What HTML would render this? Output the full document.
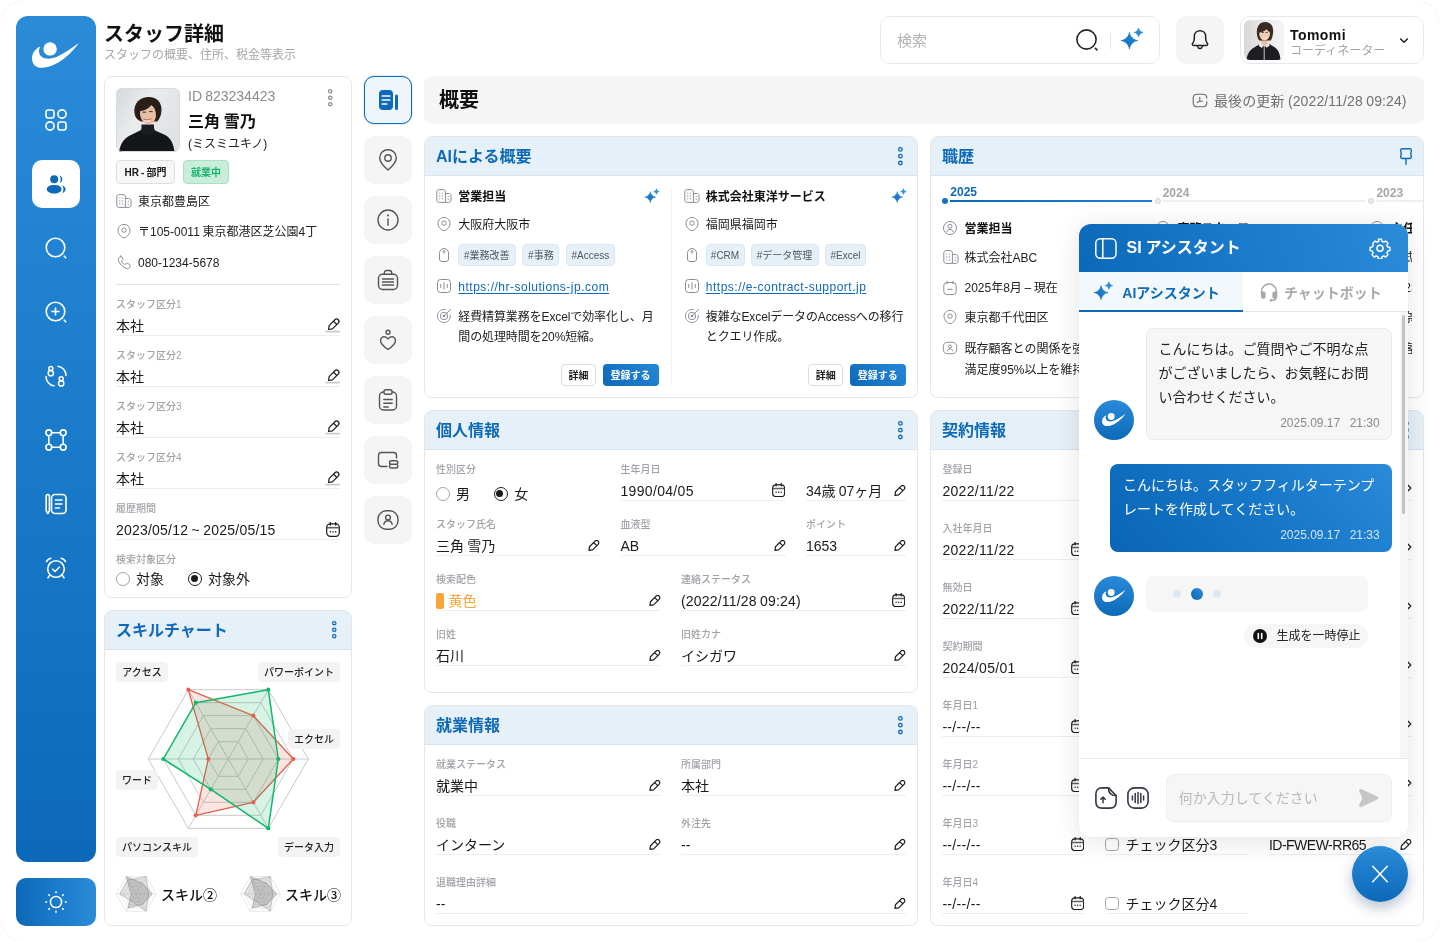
<!DOCTYPE html>
<html lang="ja">
<head>
<meta charset="utf-8">
<title>スタッフ詳細</title>
<style>
*{box-sizing:border-box;margin:0;padding:0}
html,body{width:1440px;height:942px;overflow:hidden;background:#fff}
body{font-family:"Liberation Sans","Noto Sans CJK JP",sans-serif;color:#1a1a1a;position:relative;font-size:14px;line-height:1;word-spacing:-.05em}
.abs{position:absolute}
svg{display:block}
/* sidebar */
#side{position:absolute;left:16px;top:16px;width:80px;height:846px;border-radius:12px;background:linear-gradient(180deg,#2a8bd9 0%,#1f80d0 35%,#0c69b9 100%)}
#side .ic{position:absolute;left:28px;width:24px;height:24px}
#side .act{position:absolute;left:16px;top:144px;width:48px;height:48px;border-radius:10px;background:#fff}
#theme{position:absolute;left:16px;top:878px;width:80px;height:48px;border-radius:10px;background:linear-gradient(90deg,#0c69b9 0%,#2a8bd9 100%)}
/* page header */
#title{position:absolute;left:104px;top:22.300px;font-size:20px;font-weight:700;letter-spacing:0;color:#111;line-height:24px}
#sub{position:absolute;left:104px;top:47.300px;font-size:12px;color:#a6a6a6;line-height:16px}
#search{position:absolute;left:880px;top:16px;width:280px;height:48px;border:1px solid #e8e8e8;border-radius:10px;background:#fff}
#bell{position:absolute;left:1176px;top:16px;width:48px;height:48px;border-radius:10px;background:#f5f5f5}
#user{position:absolute;left:1240px;top:16px;width:184px;height:48px;border:1px solid #e8e8e8;border-radius:10px;background:#fff}
/* cards */
.card{position:absolute;border:1px solid #e6e6e6;border-radius:8px;background:#fff;overflow:hidden}
.chead{position:absolute;left:0;top:0;right:0;height:39px;background:#e6f0f9;border-bottom:1px solid #d5e4f2;color:#0e6ab8;font-weight:700;font-size:16px;line-height:39.400px;padding-left:11px}
.lbl{position:absolute;font-size:10px;font-weight:500;color:#a2a2a8;line-height:12px;white-space:nowrap}
.val{position:absolute;font-size:14px;color:#1a1a1a;line-height:18px;white-space:nowrap}
.ul{position:absolute;height:1px;background:#eeeeee}
.t{position:absolute;white-space:nowrap}

.chip{position:absolute;height:24px;border-radius:4px;font-size:10px;font-weight:700;line-height:24.500px;text-align:center;border:1px solid #dedede;background:#f7f7f7;color:#1a1a1a;white-space:nowrap}
.chip.g{background:#c8eedb;border-color:#a9e0c6;color:#19b36f}
.r12{position:absolute;font-size:12px;line-height:16px;color:#222;white-space:nowrap}
.radio{position:absolute;width:14px;height:14px;border-radius:50%;border:1.500px solid #a4a4a8;background:#fff}
.radio.on{border-color:#1f1f1f;border-width:1.600px}
.radio.on::after{content:"";position:absolute;left:1.900px;top:1.900px;width:7px;height:7px;border-radius:50%;background:#1a1a1a}
.schip{position:absolute;height:20px;border-radius:4px;background:#f3f3f3;font-size:10px;font-weight:500;line-height:22px;text-align:center;color:#222;white-space:nowrap}
.tabb{position:absolute;left:364px;width:48px;height:48px;border-radius:10px;background:#f5f5f5}
.tabb.on{background:#eef5fb;border:1.500px solid #0e6ab8;box-shadow:0 0 0 .5px rgba(14,106,184,.25)}
.tag{position:absolute;height:21.800px;border-radius:4px;background:#e6f0f9;border:1px solid #d9e7f4;font-size:10px;line-height:22.200px;text-align:center;color:#50555e;white-space:nowrap}
.btn{position:absolute;height:22px;border-radius:4px;border:1px solid #dedede;background:#fff;font-size:10px;font-weight:700;line-height:22.600px;text-align:center;color:#222;white-space:nowrap}
.btn.pri{border:0;height:22px;line-height:24.600px;color:#fff;background:linear-gradient(45deg,#0c69b9,#2587d6)}
#root{position:absolute;left:0;top:0;width:1440px;height:942px;will-change:transform}
.cbox{position:absolute;width:13.500px;height:12.800px;border-radius:3.500px;border:1.400px solid #a2a2ac;background:#fff}
#chat{position:absolute;left:1078.600px;top:224px;width:329.200px;height:612.800px;border-radius:12px;background:#fff;box-shadow:0 4px 28px rgba(0,0,0,.11),0 0 2px rgba(0,0,0,.05);overflow:hidden}
#chatin{position:absolute;left:-.6px;top:0;width:330px;height:612px}
#chead{position:absolute;left:0;top:0;width:330px;height:48px;background:linear-gradient(75deg,#0c69b9 0%,#1a7acb 50%,#2a8bd9 100%)}
.ctab{position:absolute;top:48px;height:40px}
.ctab.on{left:0;width:165px;background:#f3f8fc;border-bottom:2px solid #0e6ab8}
.ctab.off{left:165px;width:165px;background:#fff;border-bottom:1px solid #e6e6e6}
.bot{position:absolute;width:40px;height:40px;border-radius:50%;background:linear-gradient(180deg,#2a8bd9,#0c69b9)}
#fab{position:absolute;left:1352px;top:846px;width:56px;height:56px;border-radius:50%;background:linear-gradient(180deg,#2a8bd9,#0c69b9);box-shadow:0 6px 14px rgba(0,40,90,.28)}
.carc{position:absolute;width:21px;height:21px;overflow:hidden}
.carc i{position:absolute;width:41px;height:41px;border-radius:50%;border:1.500px dotted #ececec}
</style>
</head>
<body>
<div id="root">
<!-- ICON SYMBOLS -->
<svg width="0" height="0" style="position:absolute">
<defs>
<linearGradient id="gv" x1="0" y1="0" x2="0" y2="1"><stop offset="0" stop-color="#2a8bd9"/><stop offset="1" stop-color="#0c69b9"/></linearGradient><linearGradient id="gb" x1="0" y1="1" x2="1" y2="0"><stop offset="0" stop-color="#0c69b9"/><stop offset="1" stop-color="#2a8bd9"/></linearGradient>
<symbol id="i-logo" viewBox="0 0 48 27"><path d="M46.900 1C42 8 33 17 25.400 21 19 24.500 11.500 26.600 6.700 25.500 2.500 24.500 0 21 0 16.200 0 11.500 3.500 6.500 8.300 4.600 6.200 8.200 6.800 12.500 9.600 14.700c3.800 2.900 10.400 2.400 15.800-.2C32 11.400 40 6 46.900 1Z" fill="#fff"/><circle cx="18.100" cy="6.900" r="6.700" fill="#fff"/></symbol>
<symbol id="i-pen" viewBox="-1.5 -0.5 16 15"><path d="M2.600 7.100 8.450 1.250A2.330 2.330 0 0 1 11.750 4.550L5.900 10.400 2.100 11Z M7 2.700l3.300 3.300" fill="none" stroke="#1a1a1a" stroke-width="1.200" stroke-linejoin="round" stroke-linecap="round"/><path d="M-1 13.100h14.200" stroke="#c6c6c6" stroke-width="1.600"/></symbol>
<symbol id="i-pen2" viewBox="0 0 14 13"><path d="M2.600 7.100 8.450 1.250A2.330 2.330 0 0 1 11.750 4.550L5.900 10.400 2.100 11Z M7 2.700l3.300 3.300" fill="none" stroke="#1a1a1a" stroke-width="1.250" stroke-linejoin="round" stroke-linecap="round"/></symbol>
<symbol id="i-cal" viewBox="0 0 14 15"><rect x=".7" y="1.900" width="12.600" height="12.400" rx="3.600" fill="none" stroke="#1a1a1a" stroke-width="1.200"/><path d="M4.300 .6v2.400M9.700 .6v2.400" stroke="#1a1a1a" stroke-width="1.300" stroke-linecap="round" fill="none"/><path d="M1 5.700h12" stroke="#5f5f5f" stroke-width="1.600" fill="none"/><path d="M4.300 9.700h.1M7 9.700h.1M9.600 9.700h.1" stroke="#1a1a1a" stroke-width="1.400" stroke-linecap="round"/></symbol>
<symbol id="i-keb" viewBox="0 0 6 18"><circle cx="3" cy="3" r="1.550" fill="none" stroke="currentColor" stroke-width="1.150"/><circle cx="3" cy="9" r="1.550" fill="none" stroke="currentColor" stroke-width="1.150"/><circle cx="3" cy="15" r="1.550" fill="none" stroke="currentColor" stroke-width="1.150"/></symbol>
<symbol id="i-bld" viewBox="0 0 16 16"><path d="M3.100 1.600h4c1.300 0 2.300 1 2.300 2.300v10.500H3.100c-1.300 0-2.300-1-2.300-2.300V3.900c0-1.300 1-2.300 2.300-2.300Z" fill="none" stroke="#8c8c96" stroke-width="1" stroke-linejoin="round"/><path d="M9.400 5.500h3.300c1.300 0 2.300 1 2.300 2.300v4.300c0 1.300-1 2.300-2.300 2.300H9.400" fill="none" stroke="#8c8c96" stroke-width="1" stroke-linejoin="round"/><path d="M3.700 5h.1M6.400 5h.1M3.700 7.900h.1M6.400 7.900h.1M3.700 10.800h.1M6.400 10.800h.1M12.200 8.300h.1M12.200 11.200h.1" stroke="#8c8c96" stroke-width="1.200" stroke-linecap="round"/></symbol>
<symbol id="i-pin" viewBox="0 0 16 16"><path d="M8 14.700c-.9 0-1.700-.4-2.500-1C3.400 12.100 2 10 2 7.300 2 3.900 4.600 1.400 8 1.400s6 2.500 6 5.900c0 2.700-1.400 4.800-3.500 6.400-.8.600-1.600 1-2.500 1Z" fill="none" stroke="#8c8c96" stroke-width="1" stroke-linejoin="round"/><circle cx="8" cy="7.100" r="2.200" fill="none" stroke="#8c8c96" stroke-width="1"/></symbol>
<symbol id="i-tag" viewBox="0 0 16 16"><path d="M3.500 6.200C3.500 3.500 5.500 1.500 8 1.500s4.500 2 4.500 4.500v6c0 1.500-1 2.500-2.500 2.500H6c-1.500 0-2.500-1-2.500-2.500Z" fill="none" stroke="#8c8c96" stroke-width="1" stroke-linejoin="round"/><ellipse cx="8" cy="4.800" rx="1" ry="1.300" fill="none" stroke="#8c8c96" stroke-width=".9"/></symbol>
<symbol id="i-web" viewBox="0 0 16 16"><rect x="1.500" y="1.500" width="13" height="13" rx="3" fill="none" stroke="#8c8c96" stroke-width="1"/><path d="M4.700 6.500v3M8 4.800v6.400M11.300 6.500v3" stroke="#8c8c96" stroke-width="1" stroke-linecap="round"/></symbol>
<symbol id="i-tgt" viewBox="0 0 16 16"><path d="M14.300 7c.1.300.1.700.1 1 0 3.600-2.900 6.500-6.500 6.500S1.500 11.600 1.500 8 4.400 1.500 8 1.500c.4 0 .8 0 1.200.1" fill="none" stroke="#8c8c96" stroke-width="1" stroke-linecap="round"/><circle cx="8" cy="8" r="3.700" fill="none" stroke="#8c8c96" stroke-width="1"/><circle cx="8" cy="8" r="1.300" fill="#8c8c96"/><path d="M8.500 7.500 14.500 1.500" stroke="#8c8c96" stroke-width="1" stroke-linecap="round"/></symbol>
<symbol id="i-ucirc" viewBox="0 0 16 16"><circle cx="8" cy="8" r="6.500" fill="none" stroke="#8c8c96" stroke-width="1"/><circle cx="8" cy="6.300" r="2" fill="none" stroke="#8c8c96" stroke-width="1"/><path d="M4.600 11.800c.7-1.500 2-2.300 3.400-2.300s2.700.8 3.400 2.300" fill="none" stroke="#8c8c96" stroke-width="1" stroke-linecap="round"/></symbol>
<symbol id="i-calm" viewBox="0 0 16 16"><rect x="1.800" y="2.600" width="12.400" height="12" rx="3" fill="none" stroke="#8c8c96" stroke-width="1"/><path d="M5 1.200v2.600M11 1.200v2.600M5.800 9.300h4.400" stroke="#8c8c96" stroke-width="1" stroke-linecap="round" fill="none"/></symbol>
<symbol id="i-ubox" viewBox="0 0 16 16"><rect x="1.300" y="2.300" width="13.400" height="11.400" rx="4.200" fill="none" stroke="#8c8c96" stroke-width="1"/><circle cx="8" cy="6.500" r="1.500" fill="none" stroke="#8c8c96" stroke-width="1"/><path d="M5.400 10.800c.4-1.300 1.400-2 2.600-2s2.200.7 2.600 2" fill="none" stroke="#8c8c96" stroke-width="1" stroke-linecap="round"/></symbol>
<symbol id="i-tel" viewBox="0 0 16 16"><path d="M5.200 1.800 3.600 2.300c-1 .4-1.600 1.400-1.300 2.500 1 4.200 4.400 7.600 8.800 8.900 1 .3 2.100-.3 2.500-1.300l.5-1.600c.2-.6-.1-1.200-.7-1.500l-2.200-1c-.5-.2-1.100-.1-1.500.3l-.9 1C7.200 8.800 6.100 7.700 5.400 6.100l1-.9c.4-.4.500-1 .3-1.500l-1-2.200c-.2-.5-.9-.8-1.500-.7Z" fill="none" stroke="#8c8c96" stroke-width="1" stroke-linejoin="round"/></symbol>
<symbol id="i-spark" viewBox="0 0 24 24"><path d="M9.40 5.50C9.40 9.00 14.00 13.60 17.50 13.60C14.00 13.60 9.40 18.20 9.40 21.70C9.40 18.20 4.80 13.60 1.30 13.60C4.80 13.60 9.40 9.00 9.40 5.50Z" fill="url(#gb)" stroke="url(#gb)" stroke-width="1" stroke-linejoin="round"/><path d="M18.60 1.00C18.60 2.90 21.10 5.40 23.00 5.40C21.10 5.40 18.60 7.90 18.60 9.80C18.60 7.90 16.10 5.40 14.20 5.40C16.10 5.40 18.60 2.90 18.60 1.00Z" fill="#2a8bd9" stroke="#2a8bd9" stroke-width=".8" stroke-linejoin="round"/></symbol>
</defs>
</svg>


<!-- faint corner arcs -->
<div class="carc" style="left:0;top:0"><i style="left:1px;top:1px"></i></div>
<div class="carc" style="left:1419px;top:0"><i style="left:-21px;top:1px"></i></div>
<div class="carc" style="left:0;top:921px"><i style="left:1px;top:-21px"></i></div>
<div class="carc" style="left:1419px;top:921px"><i style="left:-21px;top:-21px"></i></div>

<!-- SIDEBAR -->
<div id="side">
  <svg class="abs" style="left:16.200px;top:25.700px" width="48" height="27"><use href="#i-logo"/></svg>
  <div class="act"></div>

  <!-- grid -->
  <svg class="ic" style="top:92px" viewBox="0 0 24 24" fill="none" stroke="#fff" stroke-width="1.600"><rect x="2" y="2" width="8" height="8" rx="2.200"/><circle cx="18" cy="6" r="4.100"/><circle cx="6" cy="18" r="4.100"/><rect x="14" y="14" width="8" height="8" rx="2.200"/></svg>
  <!-- users (active) -->
  <svg class="ic" style="top:156px" viewBox="0 0 24 24"><circle cx="10.200" cy="7.300" r="4" fill="#0e6ab8"/><path d="M2.800 17.300c0-2.700 3.300-4.200 7.400-4.200s7.400 1.500 7.400 4.200-3.300 4.200-7.400 4.200-7.400-1.500-7.400-4.200Z" fill="#0e6ab8"/><path d="M15.300 3.600c1.800.3 3 1.800 3 3.700s-1.200 3.300-3 3.700c.9-1 1.400-2.300 1.400-3.700s-.5-2.700-1.400-3.700ZM18.300 13.500c1.900.6 3.300 1.900 3.300 3.800s-1.400 3.100-3.300 3.700c.7-1 1.100-2.200 1.100-3.700s-.4-2.800-1.100-3.800Z" fill="#0e6ab8"/></svg>
  <!-- search -->
  <svg class="ic" style="top:220px" viewBox="0 0 24 24" fill="none" stroke="#fff" stroke-width="1.600" stroke-linecap="round"><circle cx="11.500" cy="11.500" r="9.300"/><path d="M20.200 20.200l1.600 1.600"/></svg>
  <!-- zoom plus -->
  <svg class="ic" style="top:284px" viewBox="0 0 24 24" fill="none" stroke="#fff" stroke-width="1.600" stroke-linecap="round"><circle cx="11.500" cy="11.500" r="9.300"/><path d="M20.200 20.200l1.600 1.600M8 11.500h7M11.500 8v7"/></svg>
  <!-- user swap -->
  <svg class="ic" style="top:348px" viewBox="0 0 24 24" fill="none" stroke="#fff" stroke-width="1.500" stroke-linecap="round"><path d="M14 2.200c4.600.7 8 4.600 8 9.300M10 21.800c-4.600-.7-8-4.600-8-9.300"/><circle cx="6.800" cy="4.600" r="2"/><circle cx="6.800" cy="9.200" r="2.600"/><circle cx="17.200" cy="14.800" r="2"/><circle cx="17.200" cy="19.400" r="2.600"/></svg>
  <!-- nodes -->
  <svg class="ic" style="top:412px" viewBox="0 0 24 24" fill="none" stroke="#fff" stroke-width="1.600"><circle cx="4.800" cy="4.800" r="2.900"/><circle cx="19.200" cy="4.800" r="2.900"/><circle cx="4.800" cy="19.200" r="2.900"/><circle cx="19.200" cy="19.200" r="2.900"/><path d="M7.700 4.800h8.600M7.700 19.200h8.600M4.800 7.700v8.600M19.200 7.700v8.600"/></svg>
  <!-- note -->
  <svg class="ic" style="top:476px" viewBox="0 0 24 24" fill="none" stroke="#fff" stroke-width="1.600" stroke-linecap="round" stroke-linejoin="round"><rect x="7.500" y="2.500" width="14.500" height="19" rx="3.500"/><path d="M11.500 8h6.500M11.500 12h6.500M11.500 16h4"/><path d="M2.200 4.500c0-1.100.8-2 1.600-2s1.600.9 1.600 2v14.300l-1.600 2.700-1.600-2.700Z"/></svg>
  <!-- alarm -->
  <svg class="ic" style="top:540px" viewBox="0 0 24 24" fill="none" stroke="#fff" stroke-width="1.600" stroke-linecap="round" stroke-linejoin="round"><circle cx="12" cy="13" r="8.300"/><path d="M8.700 13.200l2.300 2.300 4.300-4.300M2.500 5.500C3.500 3.800 5 2.700 6.800 2.200M21.500 5.500c-1-1.700-2.500-2.800-4.300-3.300M5.800 19.200 4 21.800M18.200 19.200 20 21.800"/></svg>
</div>
<div id="theme"><svg class="abs" style="left:28px;top:12px" width="24" height="24" viewBox="0 0 24 24" fill="none" stroke="#fff" stroke-width="1.500" stroke-linecap="round"><circle cx="12" cy="12" r="5.600"/><path d="M12 1.800v.9M12 21.300v.9M1.800 12h.9M21.300 12h.9M4.800 4.800l.6.600M18.600 18.600l.6.600M4.800 19.200l.6-.6M18.600 5.400l.6-.6"/></svg></div>


<!-- PAGE HEADER -->
<div id="title">スタッフ詳細</div>
<div id="sub">スタッフの概要、住所、税金等表示</div>
<div id="search">
  <div class="t" style="left:16px;top:14px;font-size:15px;line-height:20px;color:#b3b3b3">検索</div>
  <svg class="abs" style="left:194px;top:11px" width="24" height="24" viewBox="0 0 24 24" fill="none" stroke="#222" stroke-width="1.600" stroke-linecap="round"><circle cx="11.500" cy="11.500" r="9.600"/><path d="M20.400 20.400l1.500 1.500"/></svg>
  <div class="abs" style="left:229px;top:16px;width:1px;height:16px;background:#e3e3e3"></div>
  <svg class="abs" style="left:239px;top:10px" width="24" height="24"><use href="#i-spark"/></svg>
</div>
<div id="bell"><svg class="abs" style="left:13px;top:13px" width="22" height="22" viewBox="0 0 22 22" fill="none" stroke="#222" stroke-width="1.500" stroke-linecap="round" stroke-linejoin="round"><path d="M11 1.700c-3.300 0-5.700 2.500-5.700 5.800v2.500c0 1.600-.6 3-1.600 4.200-.9 1-.2 2.400 1.100 2.400h12.400c1.300 0 2-1.400 1.100-2.400-1-1.200-1.600-2.600-1.600-4.200V7.500c0-3.300-2.400-5.800-5.700-5.800Z"/><path d="M8.600 17.400c.3 1.300 1.200 2.100 2.400 2.100s2.100-.8 2.400-2.100"/></svg></div>
<div id="user">
  <svg class="abs" style="left:3px;top:3px;border-radius:6px" width="40" height="40" viewBox="0 0 40 40">
    <defs><linearGradient id="av2" x1="0" y1="0" x2="1" y2="0"><stop offset="0" stop-color="#d9d6d6"/><stop offset=".55" stop-color="#ececec"/><stop offset="1" stop-color="#f4f4f4"/></linearGradient></defs>
    <rect width="40" height="40" fill="url(#av2)"/>
    <path d="M2.500 40c.8-6.500 3.500-10.500 8.500-13l5.500-3.500h8l5 3c4.500 2.500 6.500 6.500 7 13.500Z" fill="#1d1e22"/>
    <path d="M16.500 22.500h7.500l1.800 3-3.300 2.200-2.300-2.700-2.600 3-3-2.500Z" fill="#efeff0"/>
    <path d="M20.200 25v15" stroke="#d8d8da" stroke-width=".9"/>
    <path d="M17.300 18h6.400v6l-3.200 2.300-3.200-2.300Z" fill="#e8bfa9"/>
    <path d="M13 14.500C12 7 15.500 2 21 2s9 4 8 11.500c-.3 2.500-1 5-2.300 7h-11.500c-1.200-1.700-1.900-3.800-2.200-6Z" fill="#3a2a22"/>
    <ellipse cx="20.600" cy="13.800" rx="5.400" ry="6.700" fill="#efcbb6"/>
    <path d="M14.800 12.500c.3-4.500 2.700-7.200 6.200-7.200s6 2.700 6 7c-1.800-.3-3.400-1.400-4.500-3-1.700 2-4.500 3-7.700 3.200Z" fill="#3a2a22"/>
    <path d="M18.300 17.200c1.400 1.100 3.200 1.100 4.600 0-.9 1.800-3.700 1.800-4.600 0Z" fill="#fff"/>
    <path d="M18 12.500h1.600M21.800 12.500h1.600" stroke="#4a362d" stroke-width=".8" stroke-linecap="round"/>
  </svg>
  <div class="t" style="left:49px;top:9px;font-size:14px;line-height:18px;font-weight:700;color:#111;letter-spacing:.45px">Tomomi</div>
  <div class="t" style="left:49px;top:26px;font-size:12px;line-height:16px;color:#a6a6a6">コーディネーター</div>
  <svg class="abs" style="left:157.300px;top:19.500px" width="12" height="8" viewBox="0 0 12 8" fill="none" stroke="#222" stroke-width="1.500" stroke-linecap="round" stroke-linejoin="round"><path d="M2.600 2 6 5.300l3.400-3.300"/></svg>
</div>

<!-- PROFILE CARD -->
<div class="card" id="prof" style="left:104px;top:76px;width:248px;height:522px">
  <svg class="abs" style="left:11px;top:11px;border-radius:6px" width="64" height="64" viewBox="0 0 64 64">
    <defs><linearGradient id="avbg" x1="0" y1="0" x2="1" y2=".6"><stop offset="0" stop-color="#d5d9dc"/><stop offset=".45" stop-color="#e9ebed"/><stop offset="1" stop-color="#dfe2e4"/></linearGradient></defs>
    <rect width="64" height="64" fill="url(#avbg)"/>
    <path d="M3 64c1.500-9 5.500-14.500 13-17.500l9-4.500 1-2h12l1 2.500 8 3.500c7.500 3 10.500 9 11.500 18Z" fill="#15161a"/>
    <path d="M25.500 36.500h12.500v8.500c-3.500 2.500-9 2.500-12.500 0Z" fill="#1b1c20"/>
    <path d="M19 27.500c-2.500-9 2-17 11-18.300 8.500-1.200 15.500 3.300 15.500 12.300 0 5-1.800 9.500-4.300 12h-16c-3-1.200-5.200-3-6.200-6Z" fill="#2a1e19"/>
    <ellipse cx="32" cy="26" rx="8" ry="10.300" fill="#e7bda5" transform="rotate(-8 32 26)"/>
    <path d="M21.500 23.500c0-7 4.500-11.500 11.500-11.500 5.500 0 9.500 3 10.500 8.500-3-.3-6-1.600-8.200-3.600-2.500 3.600-7.300 6-13.800 6.600Z" fill="#2a1e19"/>
    <path d="M28 31.500c2 1.600 5.200 1.500 7.200-.3-1.300 3-5.800 3.200-7.200.3Z" fill="#fff"/>
    <path d="M27.500 31.200c2.400.9 5.600.7 8-.4" stroke="#b4574f" stroke-width=".8" fill="none"/>
    <path d="M27 24.200h2.600M33.600 23.600h2.600" stroke="#3a2a22" stroke-width="1" stroke-linecap="round"/>
    <rect x=".5" y=".5" width="63" height="63" rx="5.500" fill="none" stroke="#d9dcde"/>
  </svg>
  <div class="t" style="left:83px;top:9.600px;font-size:14px;line-height:18px;color:#8c8c8c">ID 823234423</div>
  <div class="t" style="left:83px;top:34px;font-size:16px;line-height:22px;font-weight:700;color:#111">三角 雪乃</div>
  <div class="t" style="left:83px;top:58.700px;font-size:12px;line-height:16px;color:#222">(ミスミユキノ)</div>
  <svg class="abs" style="left:221.700px;top:11.200px;color:#8c8c8c" width="6.500" height="19.500" viewBox="0 0 6 18"><use href="#i-keb"/></svg>
  <div class="chip" style="left:11px;top:83px;width:59px">HR - 部門</div>
  <div class="chip g" style="left:78px;top:83px;width:46px">就業中</div>
  <svg class="abs" style="left:11px;top:116px" width="16" height="16"><use href="#i-bld"/></svg>
  <div class="r12" style="left:33px;top:116.700px">東京都豊島区</div>
  <svg class="abs" style="left:11px;top:146px" width="16" height="16"><use href="#i-pin"/></svg>
  <div class="r12" style="left:33px;top:146.700px">〒105-0011 東京都港区芝公園4丁</div>
  <svg class="abs" style="left:11px;top:178px" width="16" height="16"><use href="#i-tel"/></svg>
  <div class="r12" style="left:33px;top:178px">080-1234-5678</div>
  <div class="ul" style="left:11px;top:207px;width:224px;background:#e3e3e3"></div>

  <div class="lbl" style="left:11px;top:222px">スタッフ区分1</div>
  <div class="val" style="left:11px;top:240px">本社</div>
  <svg class="abs" style="left:219.5px;top:240.5px" width="16" height="15"><use href="#i-pen"/></svg>
  <div class="ul" style="left:11px;top:258px;width:224px"></div>

  <div class="lbl" style="left:11px;top:273px">スタッフ区分2</div>
  <div class="val" style="left:11px;top:291px">本社</div>
  <svg class="abs" style="left:219.5px;top:291.5px" width="16" height="15"><use href="#i-pen"/></svg>
  <div class="ul" style="left:11px;top:309px;width:224px"></div>

  <div class="lbl" style="left:11px;top:324px">スタッフ区分3</div>
  <div class="val" style="left:11px;top:342px">本社</div>
  <svg class="abs" style="left:219.5px;top:342.5px" width="16" height="15"><use href="#i-pen"/></svg>
  <div class="ul" style="left:11px;top:360px;width:224px"></div>

  <div class="lbl" style="left:11px;top:375px">スタッフ区分4</div>
  <div class="val" style="left:11px;top:393px">本社</div>
  <svg class="abs" style="left:219.5px;top:393.5px" width="16" height="15"><use href="#i-pen"/></svg>
  <div class="ul" style="left:11px;top:411px;width:224px"></div>

  <div class="lbl" style="left:11px;top:426px">履歴期間</div>
  <div class="val" style="left:11px;top:444px;letter-spacing:.21px">2023/05/12 ~ 2025/05/15</div>
  <svg class="abs" style="left:220.5px;top:444.5px" width="14" height="15"><use href="#i-cal"/></svg>
  <div class="ul" style="left:11px;top:462px;width:224px"></div>

  <div class="lbl" style="left:11px;top:477px">検索対象区分</div>
  <div class="radio" style="left:11px;top:495px"></div>
  <div class="val" style="left:31px;top:493px">対象</div>
  <div class="radio on" style="left:83px;top:495px"></div>
  <div class="val" style="left:103px;top:493px">対象外</div>
</div>


<!-- SKILL CARD -->
<div class="card" style="left:104px;top:610px;width:248px;height:316px">
  <div class="chead">スキルチャート</div>
  <svg class="abs" style="left:225.9px;top:9.1px;color:#0e6ab8" width="6.500" height="19.500" viewBox="0 0 6 18"><use href="#i-keb"/></svg>
  <svg class="abs" style="left:0;top:40px" width="246" height="274" viewBox="105 651 246 274"><polygon points="248.3,759.0 238.3,741.7 218.3,741.7 208.3,759.0 218.3,776.3 238.3,776.3" fill="none" stroke="#c9c9c9" stroke-width="1"/><polygon points="263.3,759.0 245.8,728.7 210.8,728.7 193.3,759.0 210.8,789.3 245.8,789.3" fill="none" stroke="#c9c9c9" stroke-width="1"/><polygon points="278.3,759.0 253.3,715.7 203.3,715.7 178.3,759.0 203.3,802.3 253.3,802.3" fill="none" stroke="#c9c9c9" stroke-width="1"/><polygon points="293.3,759.0 260.8,702.7 195.8,702.7 163.3,759.0 195.8,815.3 260.8,815.3" fill="none" stroke="#c9c9c9" stroke-width="1"/><polygon points="308.3,759.0 268.3,689.7 188.3,689.7 148.3,759.0 188.3,828.3 268.3,828.3" fill="none" stroke="#c9c9c9" stroke-width="1"/><path d="M308.3 759.0L148.3 759.0" stroke="#c9c9c9" stroke-width="1"/><path d="M268.3 689.7L188.3 828.3" stroke="#c9c9c9" stroke-width="1"/><path d="M188.3 689.7L268.3 828.3" stroke="#c9c9c9" stroke-width="1"/><polygon points="293.3,759.0 253.3,715.7 188.3,689.7 208.3,759.0 195.8,815.3 253.3,802.3" fill="rgba(232,96,76,.16)" stroke="#e8604c" stroke-width="1.300" stroke-linejoin="round"/><polygon points="278.3,759.0 268.3,689.7 195.8,702.7 163.3,759.0 210.8,789.3 268.3,828.3" fill="rgba(18,183,106,.17)" stroke="#12b76a" stroke-width="1.500" stroke-linejoin="round"/><circle cx="293.3" cy="759.0" r="2.100" fill="#e8604c"/><circle cx="253.3" cy="715.7" r="2.100" fill="#e8604c"/><circle cx="188.3" cy="689.7" r="2.100" fill="#e8604c"/><circle cx="208.3" cy="759.0" r="2.100" fill="#e8604c"/><circle cx="195.8" cy="815.3" r="2.100" fill="#e8604c"/><circle cx="253.3" cy="802.3" r="2.100" fill="#e8604c"/><circle cx="278.3" cy="759.0" r="2.100" fill="#12b76a"/><circle cx="268.3" cy="689.7" r="2.100" fill="#12b76a"/><circle cx="195.8" cy="702.7" r="2.100" fill="#12b76a"/><circle cx="163.3" cy="759.0" r="2.100" fill="#12b76a"/><circle cx="210.8" cy="789.3" r="2.100" fill="#12b76a"/><circle cx="268.3" cy="828.3" r="2.100" fill="#12b76a"/><polygon points="141.1,893.9 138.6,889.6 133.6,889.6 131.1,893.9 133.6,898.2 138.6,898.2" fill="none" stroke="#d0d0d0" stroke-width="0.5"/><polygon points="144.8,893.9 140.5,886.3 131.7,886.3 127.3,893.9 131.7,901.5 140.5,901.5" fill="none" stroke="#d0d0d0" stroke-width="0.5"/><polygon points="148.6,893.9 142.3,883.1 129.8,883.1 123.6,893.9 129.8,904.7 142.3,904.7" fill="none" stroke="#d0d0d0" stroke-width="0.5"/><polygon points="152.3,893.9 144.2,879.8 128.0,879.8 119.8,893.9 128.0,908.0 144.2,908.0" fill="none" stroke="#d0d0d0" stroke-width="0.5"/><polygon points="156.1,893.9 146.1,876.6 126.1,876.6 116.1,893.9 126.1,911.2 146.1,911.2" fill="none" stroke="#d0d0d0" stroke-width="0.5"/><path d="M156.1 893.9L116.1 893.9" stroke="#d0d0d0" stroke-width="0.5"/><path d="M146.1 876.6L126.1 911.2" stroke="#d0d0d0" stroke-width="0.5"/><path d="M126.1 876.6L146.1 911.2" stroke="#d0d0d0" stroke-width="0.5"/><polygon points="148.6,893.9 146.1,876.6 128.0,879.8 119.8,893.9 131.7,901.5 146.1,911.2" fill="rgba(120,120,120,.20)" stroke="#9a9a9a" stroke-width=".5"/><polygon points="152.3,893.9 142.3,883.1 126.1,876.6 131.1,893.9 128.0,908.0 142.3,904.7" fill="rgba(100,100,100,.26)" stroke="#8a8a8a" stroke-width=".5"/><polygon points="265.3,893.9 262.8,889.6 257.8,889.6 255.3,893.9 257.8,898.2 262.8,898.2" fill="none" stroke="#d0d0d0" stroke-width="0.5"/><polygon points="269.1,893.9 264.7,886.3 255.9,886.3 251.6,893.9 255.9,901.5 264.7,901.5" fill="none" stroke="#d0d0d0" stroke-width="0.5"/><polygon points="272.8,893.9 266.6,883.1 254.1,883.1 247.8,893.9 254.1,904.7 266.6,904.7" fill="none" stroke="#d0d0d0" stroke-width="0.5"/><polygon points="276.6,893.9 268.4,879.8 252.2,879.8 244.1,893.9 252.2,908.0 268.4,908.0" fill="none" stroke="#d0d0d0" stroke-width="0.5"/><polygon points="280.3,893.9 270.3,876.6 250.3,876.6 240.3,893.9 250.3,911.2 270.3,911.2" fill="none" stroke="#d0d0d0" stroke-width="0.5"/><path d="M280.3 893.9L240.3 893.9" stroke="#d0d0d0" stroke-width="0.5"/><path d="M270.3 876.6L250.3 911.2" stroke="#d0d0d0" stroke-width="0.5"/><path d="M250.3 876.6L270.3 911.2" stroke="#d0d0d0" stroke-width="0.5"/><polygon points="272.8,893.9 270.3,876.6 252.2,879.8 244.1,893.9 255.9,901.5 270.3,911.2" fill="rgba(120,120,120,.20)" stroke="#9a9a9a" stroke-width=".5"/><polygon points="276.6,893.9 266.6,883.1 250.3,876.6 255.3,893.9 252.2,908.0 266.6,904.7" fill="rgba(100,100,100,.26)" stroke="#8a8a8a" stroke-width=".5"/></svg>
  <div class="schip" style="left:11px;top:51px;width:52px">アクセス</div>
  <div class="schip" style="left:153px;top:51px;width:82px">パワーポイント</div>
  <div class="schip" style="left:183px;top:118px;width:52px">エクセル</div>
  <div class="schip" style="left:11px;top:159px;width:42px">ワード</div>
  <div class="schip" style="left:11px;top:226px;width:82px">パソコンスキル</div>
  <div class="schip" style="left:173px;top:226px;width:62px">データ入力</div>
  <div class="t" style="left:56px;top:273px;font-size:14px;line-height:22px;font-weight:500;color:#111">スキル②</div>
  <div class="t" style="left:180px;top:273px;font-size:14px;line-height:22px;font-weight:500;color:#111">スキル③</div>
</div>

<!-- TAB COLUMN -->
<div class="tabb on" style="top:76px"><svg class="abs" style="left:11px;top:11px" width="24" height="24" viewBox="0 0 24 24"><path d="M3 5.500C3 3.600 4.600 2 6.500 2h7C15.400 2 17 3.600 17 5.500v13c0 1.900-1.600 3.500-3.500 3.500h-7C4.600 22 3 20.400 3 18.500Z" fill="#0e6ab8"/><rect x="19" y="6.500" width="3" height="15.500" rx="1.500" fill="#0e6ab8"/><path d="M6.300 8h7.400M6.300 12h7.400M6.300 16h4.400" stroke="#fff" stroke-width="1.700" stroke-linecap="round"/></svg></div>
<div class="tabb" style="top:136px"><svg class="abs" style="left:12px;top:12px" width="24" height="24" viewBox="0 0 24 24" fill="none" stroke="#555" stroke-width="1.400" stroke-linejoin="round"><path d="M12 22c-4.500-3.800-8.300-7.500-8.300-12C3.700 5.200 7.400 1.800 12 1.800s8.300 3.400 8.300 8.200c0 4.500-3.800 8.200-8.300 12Z"/><circle cx="12" cy="10" r="3.200"/></svg></div>
<div class="tabb" style="top:196px"><svg class="abs" style="left:12px;top:12px" width="24" height="24" viewBox="0 0 24 24" fill="none" stroke="#555" stroke-width="1.400" stroke-linecap="round"><circle cx="12" cy="12" r="10"/><path d="M12 11v6.200"/><path d="M12 7.300v.2" stroke-width="1.900"/></svg></div>
<div class="tabb" style="top:256px"><svg class="abs" style="left:12px;top:12px" width="24" height="24" viewBox="0 0 24 24" fill="none" stroke="#555" stroke-width="1.400" stroke-linecap="round" stroke-linejoin="round"><rect x="2.500" y="6.300" width="19" height="15.200" rx="4"/><path d="M8.300 6.300V4.800c0-1.300 1-2.300 2.300-2.300h2.800c1.300 0 2.300 1 2.300 2.300v1.500M6.500 11h11M6.500 14h11M6.500 17h11"/></svg></div>
<div class="tabb" style="top:316px"><svg class="abs" style="left:12px;top:12px" width="24" height="24" viewBox="0 0 24 24" fill="none" stroke="#555" stroke-width="1.400" stroke-linejoin="round"><circle cx="12" cy="4.300" r="2"/><path d="M12 21.500c-4-2.700-7.500-5.500-7.500-9 0-2.200 1.700-3.800 3.700-3.800 1.600 0 3 .9 3.800 2.300.8-1.400 2.200-2.300 3.800-2.300 2 0 3.700 1.600 3.700 3.800 0 3.500-3.500 6.300-7.500 9Z"/></svg></div>
<div class="tabb" style="top:376px"><svg class="abs" style="left:12px;top:12px" width="24" height="24" viewBox="0 0 24 24" fill="none" stroke="#555" stroke-width="1.400" stroke-linecap="round" stroke-linejoin="round"><rect x="3.500" y="4" width="17" height="18" rx="4"/><rect x="8" y="1.800" width="8" height="4.400" rx="1.800" fill="#f5f5f5"/><path d="M7.800 11.500h8.400M7.800 15.300h8.400M7.800 19h4.500" stroke-width="1.400"/></svg></div>
<div class="tabb" style="top:436px"><svg class="abs" style="left:12px;top:12px" width="24" height="24" viewBox="0 0 24 24" fill="none" stroke="#555" stroke-width="1.400" stroke-linecap="round" stroke-linejoin="round"><path d="M11 18.500H5.500c-1.900 0-3-1.100-3-3V7.500c0-1.900 1.100-3 3-3h12c1.900 0 3 1.100 3 3V10"/><rect x="13.500" y="12.800" width="8.300" height="3.600" rx="1.800"/><rect x="13.500" y="16.400" width="8.300" height="3.600" rx="1.800"/></svg></div>
<div class="tabb" style="top:496px"><svg class="abs" style="left:12px;top:12px" width="24" height="24" viewBox="0 0 24 24" fill="none" stroke="#555" stroke-width="1.400" stroke-linecap="round" stroke-linejoin="round"><rect x="2" y="2.800" width="20" height="18.400" rx="8.200"/><circle cx="12" cy="9.500" r="2.400"/><path d="M7.800 16.300c.5-2.200 2.200-3.500 4.200-3.500s3.700 1.300 4.200 3.500"/></svg></div>

<!-- MAIN HEADER BAR -->
<div class="abs" style="left:424px;top:76px;width:1000px;height:48px;border-radius:8px;background:#f5f5f5">
  <div class="t" style="left:15px;top:12px;font-size:20px;line-height:24px;font-weight:700;color:#111">概要</div>
  <svg class="abs" style="left:768px;top:16.500px" width="16" height="15" viewBox="0 0 16 15" fill="none" stroke="#6a6a6a" stroke-width="1.100" stroke-linecap="round" stroke-linejoin="round"><path d="M14.800 8.500v1.300c0 2.600-1.400 4-4 4H5.200c-2.600 0-4-1.400-4-4V5.200c0-2.600 1.400-4 4-4h5.600c2.600 0 4 1.400 4 4"/><path d="M7.800 4.300v3.900l-2.600 1.400M7.800 8.200h2.600"/></svg>
  <div class="t" style="left:790px;top:15.600px;font-size:14px;line-height:18px;color:#707070;letter-spacing:.12px">最後の更新 (2022/11/28 09:24)</div>
</div>

<!-- AI SUMMARY CARD -->
<div class="card" style="left:424px;top:136px;width:494px;height:262px">
<div class="chead">AIによる概要</div>
<svg class="abs" style="left:471.7px;top:8.8px;color:#0e6ab8" width="6.8" height="20.4" viewBox="0 0 6 18"><use href="#i-keb"/></svg>
<svg class="abs" style="left:11px;top:51px" width="16" height="16"><use href="#i-bld"/></svg>
<div class="t" style="left:33.3px;top:52px;font-size:12px;line-height:16px;font-weight:700;color:#111">営業担当</div>
<svg class="abs" style="left:218.5px;top:50.5px" width="16" height="16"><use href="#i-spark"/></svg>
<svg class="abs" style="left:11px;top:79px" width="16" height="16"><use href="#i-pin"/></svg>
<div class="t" style="left:33.3px;top:80px;font-size:12px;line-height:16px;">大阪府大阪市</div>
<svg class="abs" style="left:11px;top:110px" width="16" height="16"><use href="#i-tag"/></svg>
<div class="tag" style="left:33px;top:107.2px;width:57.5px">#業務改善</div>
<div class="tag" style="left:97.4px;top:107.2px;width:37px">#事務</div>
<div class="tag" style="left:141.3px;top:107.2px;width:48.3px">#Access</div>
<svg class="abs" style="left:11px;top:141px" width="16" height="16"><use href="#i-web"/></svg>
<div class="t" style="left:33.3px;top:141.5px;font-size:12px;line-height:16px;color:#0e6ab8;text-decoration:underline;text-underline-offset:2px;letter-spacing:.5px">https://hr-solutions-jp.com</div>
<svg class="abs" style="left:11px;top:171px" width="16" height="16"><use href="#i-tgt"/></svg>
<div class="abs" style="left:33.3px;top:169.8px;font-size:12px;line-height:20.500px;color:#222;white-space:nowrap;letter-spacing:-.11px">経費精算業務をExcelで効率化し、月<br>間の処理時間を20%短縮。</div>
<div class="btn" style="left:136px;top:227px;width:35px">詳細</div>
<div class="btn pri" style="left:177.5px;top:227px;width:56px">登録する</div>
<div class="abs" style="left:246px;top:52px;width:1px;height:196px;background:#f3f3f3"></div>
<svg class="abs" style="left:258.5px;top:51px" width="16" height="16"><use href="#i-bld"/></svg>
<div class="t" style="left:280.8px;top:52px;font-size:12px;line-height:16px;font-weight:700;color:#111">株式会社東洋サービス</div>
<svg class="abs" style="left:466px;top:50.5px" width="16" height="16"><use href="#i-spark"/></svg>
<svg class="abs" style="left:258.5px;top:79px" width="16" height="16"><use href="#i-pin"/></svg>
<div class="t" style="left:280.8px;top:80px;font-size:12px;line-height:16px;">福岡県福岡市</div>
<svg class="abs" style="left:258.5px;top:110px" width="16" height="16"><use href="#i-tag"/></svg>
<div class="tag" style="left:280.5px;top:107.2px;width:39px">#CRM</div>
<div class="tag" style="left:325.5px;top:107.2px;width:68px">#データ管理</div>
<div class="tag" style="left:399.7px;top:107.2px;width:41.5px">#Excel</div>
<svg class="abs" style="left:258.5px;top:141px" width="16" height="16"><use href="#i-web"/></svg>
<div class="t" style="left:280.8px;top:141.5px;font-size:12px;line-height:16px;color:#0e6ab8;text-decoration:underline;text-underline-offset:2px;letter-spacing:.5px">https://e-contract-support.jp</div>
<svg class="abs" style="left:258.5px;top:171px" width="16" height="16"><use href="#i-tgt"/></svg>
<div class="abs" style="left:280.8px;top:169.8px;font-size:12px;line-height:20.500px;color:#222;white-space:nowrap;letter-spacing:-.11px">複雑なExcelデータのAccessへの移行<br>とクエリ作成。</div>
<div class="btn" style="left:383.3px;top:227px;width:35px">詳細</div>
<div class="btn pri" style="left:424.8px;top:227px;width:56px">登録する</div>
</div>
<!-- PERSONAL INFO -->
<div class="card" style="left:424px;top:410px;width:494px;height:283px">
<div class="chead">個人情報</div>
<svg class="abs" style="left:471.7px;top:9px;color:#0e6ab8" width="6.8" height="20.4" viewBox="0 0 6 18"><use href="#i-keb"/></svg>
<div class="lbl" style="left:11px;top:52.5px">性別区分</div>
<div class="radio" style="left:11px;top:75.8px"></div><div class="val" style="left:31px;top:74.1px">男</div>
<div class="radio on" style="left:68.6px;top:75.8px"></div><div class="val" style="left:89.3px;top:74.1px">女</div>
<div class="lbl" style="left:195.5px;top:52.5px">生年月日</div>
<div class="val" style="left:195.5px;top:71px;letter-spacing:.32px">1990/04/05</div>
<svg class="abs" style="left:346.5px;top:71.8px" width="13.300" height="14.250"><use href="#i-cal"/></svg>
<div class="ul" style="left:195.5px;top:89px;width:165.5px"></div>
<div class="lbl" style="left:381px;top:52.5px"></div>
<div class="val" style="left:381px;top:71px">34歳 07ヶ月</div>
<svg class="abs" style="left:467.85px;top:74.1px" width="13.300" height="12.350"><use href="#i-pen2"/></svg>
<div class="ul" style="left:381px;top:89px;width:100px"></div>
<div class="lbl" style="left:11px;top:107.5px">スタッフ氏名</div>
<div class="val" style="left:11px;top:126px">三角 雪乃</div>
<svg class="abs" style="left:162.35px;top:129.1px" width="13.300" height="12.350"><use href="#i-pen2"/></svg>
<div class="ul" style="left:11px;top:144px;width:164.5px"></div>
<div class="lbl" style="left:195.5px;top:107.5px">血液型</div>
<div class="val" style="left:195.5px;top:126px">AB</div>
<svg class="abs" style="left:347.85px;top:129.1px" width="13.300" height="12.350"><use href="#i-pen2"/></svg>
<div class="ul" style="left:195.5px;top:144px;width:165.5px"></div>
<div class="lbl" style="left:381px;top:107.5px">ポイント</div>
<div class="val" style="left:381px;top:126px">1653</div>
<svg class="abs" style="left:467.85px;top:129.1px" width="13.300" height="12.350"><use href="#i-pen2"/></svg>
<div class="ul" style="left:381px;top:144px;width:100px"></div>
<div class="lbl" style="left:11px;top:162.5px">検索配色</div>
<div class="val" style="left:11px;top:181px;color:#f9a63a"><span style="display:inline-block;width:7.500px;height:16px;border-radius:2px;background:#f9a63a;vertical-align:-3px;margin-right:5px"></span>黄色</div>
<svg class="abs" style="left:222.85px;top:184.1px" width="13.300" height="12.350"><use href="#i-pen2"/></svg>
<div class="ul" style="left:11px;top:199px;width:225px"></div>
<div class="lbl" style="left:256px;top:162.5px">連絡ステータス</div>
<div class="val" style="left:256px;top:181px;letter-spacing:.18px">(2022/11/28 09:24)</div>
<svg class="abs" style="left:466.5px;top:181.8px" width="13.300" height="14.250"><use href="#i-cal"/></svg>
<div class="ul" style="left:256px;top:199px;width:225px"></div>
<div class="lbl" style="left:11px;top:217.5px">旧姓</div>
<div class="val" style="left:11px;top:236px">石川</div>
<svg class="abs" style="left:222.85px;top:239.1px" width="13.300" height="12.350"><use href="#i-pen2"/></svg>
<div class="ul" style="left:11px;top:254px;width:225px"></div>
<div class="lbl" style="left:256px;top:217.5px">旧姓カナ</div>
<div class="val" style="left:256px;top:236px">イシガワ</div>
<svg class="abs" style="left:467.85px;top:239.1px" width="13.300" height="12.350"><use href="#i-pen2"/></svg>
<div class="ul" style="left:256px;top:254px;width:225px"></div>
</div>
<!-- EMPLOYMENT INFO -->
<div class="card" style="left:424px;top:705px;width:494px;height:221px">
<div class="chead">就業情報</div>
<svg class="abs" style="left:471.7px;top:9.1px;color:#0e6ab8" width="6.8" height="20.4" viewBox="0 0 6 18"><use href="#i-keb"/></svg>
<div class="lbl" style="left:11px;top:52.5px">就業ステータス</div>
<div class="val" style="left:11px;top:71px">就業中</div>
<svg class="abs" style="left:222.85px;top:74.1px" width="13.300" height="12.350"><use href="#i-pen2"/></svg>
<div class="ul" style="left:11px;top:89px;width:225px"></div>
<div class="lbl" style="left:256px;top:52.5px">所属部門</div>
<div class="val" style="left:256px;top:71px">本社</div>
<svg class="abs" style="left:467.85px;top:74.1px" width="13.300" height="12.350"><use href="#i-pen2"/></svg>
<div class="ul" style="left:256px;top:89px;width:225px"></div>
<div class="lbl" style="left:11px;top:111.5px">役職</div>
<div class="val" style="left:11px;top:130px">インターン</div>
<svg class="abs" style="left:222.85px;top:133.1px" width="13.300" height="12.350"><use href="#i-pen2"/></svg>
<div class="ul" style="left:11px;top:148px;width:225px"></div>
<div class="lbl" style="left:256px;top:111.5px">外注先</div>
<div class="val" style="left:256px;top:130px">--</div>
<svg class="abs" style="left:467.85px;top:133.1px" width="13.300" height="12.350"><use href="#i-pen2"/></svg>
<div class="ul" style="left:256px;top:148px;width:225px"></div>
<div class="lbl" style="left:11px;top:170.5px">退職理由詳細</div>
<div class="val" style="left:11px;top:189px">--</div>
<svg class="abs" style="left:467.85px;top:192.1px" width="13.300" height="12.350"><use href="#i-pen2"/></svg>
<div class="ul" style="left:11px;top:207px;width:470px"></div>
</div>

<!-- CAREER CARD -->
<div class="card" style="left:930px;top:136px;width:494px;height:262px">
<div class="chead">職歴</div>
<svg class="abs" style="left:467.1px;top:9.6px" width="16" height="19" viewBox="0 0 16 19" fill="none" stroke="#0e6ab8" stroke-width="1.400" stroke-linecap="round" stroke-linejoin="round"><path d="M4.200 1.700h7.600c1.100 0 1.800 1 1.500 2-.7 2.100-.7 3.700 0 5.800.3 1-.4 2-1.500 2H4.200c-1.100 0-1.800-1-1.500-2 .7-2.100.7-3.700 0-5.800-.3-1 .4-2 1.500-2Z"/><path d="M8 11.500v5.700"/></svg>
<div class="abs" style="left:0;top:39px;width:481px;height:221px;overflow:hidden"><div class="abs" style="left:19px;top:24px;width:474px;height:2px;background:#efefef"></div>
<div class="abs" style="left:19px;top:24px;width:203px;height:2px;background:linear-gradient(90deg,#0c69b9,#1f7fd0)"></div>
<div class="abs" style="left:10.8px;top:22px;width:6.400px;height:6.400px;border-radius:50%;background:#1273c4"></div>
<div class="abs" style="left:221.1px;top:19.5px;width:11px;height:11px;background:#fff"></div>
<div class="abs" style="left:223.5px;top:22px;width:6.200px;height:6.200px;border-radius:50%;background:#ebebeb;border:1px solid #d6d6d6"></div>
<div class="abs" style="left:434.4px;top:19.5px;width:11px;height:11px;background:#fff"></div>
<div class="abs" style="left:436.8px;top:22px;width:6.200px;height:6.200px;border-radius:50%;background:#ebebeb;border:1px solid #d6d6d6"></div>
<div class="t" style="left:19.3px;top:8px;font-size:12px;line-height:16px;font-weight:700;color:#0e6ab8">2025</div>
<div class="t" style="left:231.7px;top:8.5px;font-size:12px;line-height:16px;font-weight:700;color:#a6a6aa">2024</div>
<div class="t" style="left:445.4px;top:8.5px;font-size:12px;line-height:16px;font-weight:700;color:#a6a6aa">2023</div>
<svg class="abs" style="left:11px;top:44.2px" width="16" height="16"><use href="#i-ucirc"/></svg>
<div class="t" style="left:33.5px;top:45.4px;font-size:12px;line-height:16px;font-weight:700;color:#111">営業担当</div>
<svg class="abs" style="left:11.5px;top:73.2px" width="16" height="16"><use href="#i-bld"/></svg>
<div class="t" style="left:33.5px;top:74.2px;font-size:12px;line-height:16px;color:#222">株式会社ABC</div>
<svg class="abs" style="left:11px;top:103.5px" width="16" height="16"><use href="#i-calm"/></svg>
<div class="t" style="left:33.5px;top:104px;font-size:12px;line-height:16px;color:#222">2025年8月 – 現在</div>
<svg class="abs" style="left:11px;top:133.4px" width="16" height="16"><use href="#i-pin"/></svg>
<div class="t" style="left:33.5px;top:134.4px;font-size:12px;line-height:16px;color:#222">東京都千代田区</div>
<svg class="abs" style="left:11px;top:164px" width="16" height="16"><use href="#i-ubox"/></svg>
<div class="t" style="left:33.5px;top:165.3px;font-size:12px;line-height:16px;color:#222">既存顧客との関係を強化し、顧客</div>
<div class="t" style="left:33.5px;top:185.6px;font-size:12px;line-height:16px;color:#222">満足度95%以上を維持。</div>
<svg class="abs" style="left:224px;top:44.2px" width="16" height="16"><use href="#i-ucirc"/></svg>
<div class="t" style="left:246.5px;top:45.4px;font-size:12px;line-height:16px;font-weight:700;color:#111">事務スタッフ</div>
<svg class="abs" style="left:224.5px;top:73.2px" width="16" height="16"><use href="#i-bld"/></svg>
<div class="t" style="left:246.5px;top:74.2px;font-size:12px;line-height:16px;color:#222">株式会社サンライズ</div>
<svg class="abs" style="left:224px;top:103.5px" width="16" height="16"><use href="#i-calm"/></svg>
<div class="t" style="left:246.5px;top:104px;font-size:12px;line-height:16px;color:#222">2024年1月 – 2025年7月</div>
<svg class="abs" style="left:224px;top:133.4px" width="16" height="16"><use href="#i-pin"/></svg>
<div class="t" style="left:246.5px;top:134.4px;font-size:12px;line-height:16px;color:#222">東京都新宿区</div>
<svg class="abs" style="left:224px;top:164px" width="16" height="16"><use href="#i-ubox"/></svg>
<div class="t" style="left:246.5px;top:165.3px;font-size:12px;line-height:16px;color:#222">データ入力と書類管理を担当し、</div>
<div class="t" style="left:246.5px;top:185.6px;font-size:12px;line-height:16px;color:#222">業務効率を改善。</div>
<svg class="abs" style="left:437.5px;top:44.2px" width="16" height="16"><use href="#i-ucirc"/></svg>
<div class="t" style="left:460px;top:45.4px;font-size:12px;line-height:16px;font-weight:700;color:#111">主任</div>
<svg class="abs" style="left:438px;top:73.2px" width="16" height="16"><use href="#i-bld"/></svg>
<div class="t" style="left:460px;top:74.2px;font-size:12px;line-height:16px;color:#222">株式会社ミライ</div>
<svg class="abs" style="left:437.5px;top:103.5px" width="16" height="16"><use href="#i-calm"/></svg>
<div class="t" style="left:460px;top:104px;font-size:12px;line-height:16px;color:#222">2023年4月 – 12月</div>
<svg class="abs" style="left:437.5px;top:133.4px" width="16" height="16"><use href="#i-pin"/></svg>
<div class="t" style="left:460px;top:134.4px;font-size:12px;line-height:16px;color:#222">神奈川県横浜市</div>
<svg class="abs" style="left:437.5px;top:164px" width="16" height="16"><use href="#i-ubox"/></svg>
<div class="t" style="left:460px;top:165.3px;font-size:12px;line-height:16px;color:#222">顧客対応を担当。</div>
</div>
<div class="abs" style="left:481px;top:63px;width:12px;height:2px;background:#efefef"></div>
</div>
<!-- CONTRACT CARD -->
<div class="card" style="left:930px;top:410px;width:494px;height:516px">
<div class="chead">契約情報</div>
<svg class="abs" style="left:471.6px;top:9px;color:#0e6ab8" width="6.8" height="20.4" viewBox="0 0 6 18"><use href="#i-keb"/></svg>
<div class="lbl" style="left:11.4px;top:52.5px">登録日</div>
<div class="val" style="left:11.4px;top:71px;letter-spacing:.32px">2022/11/22</div>
<div class="ul" style="left:11.4px;top:89px;width:143px"></div>
<div class="lbl" style="left:11.4px;top:111.5px">入社年月日</div>
<div class="val" style="left:11.4px;top:130px;letter-spacing:.32px">2022/11/22</div>
<svg class="abs" style="left:139.9px;top:130.8px" width="13.300" height="14.250"><use href="#i-cal"/></svg>
<div class="ul" style="left:11.4px;top:148px;width:143px"></div>
<div class="lbl" style="left:11.4px;top:170.5px">無効日</div>
<div class="val" style="left:11.4px;top:189px;letter-spacing:.32px">2022/11/22</div>
<svg class="abs" style="left:139.9px;top:189.8px" width="13.300" height="14.250"><use href="#i-cal"/></svg>
<div class="ul" style="left:11.4px;top:207px;width:143px"></div>
<div class="lbl" style="left:11.4px;top:229.5px">契約期間</div>
<div class="val" style="left:11.4px;top:248px;letter-spacing:.32px">2024/05/01</div>
<svg class="abs" style="left:139.9px;top:248.8px" width="13.300" height="14.250"><use href="#i-cal"/></svg>
<div class="ul" style="left:11.4px;top:266px;width:143px"></div>
<div class="lbl" style="left:11.4px;top:288.5px">年月日1</div>
<div class="val" style="left:11.4px;top:307px;letter-spacing:.32px">--/--/--</div>
<svg class="abs" style="left:139.9px;top:307.8px" width="13.300" height="14.250"><use href="#i-cal"/></svg>
<div class="ul" style="left:11.4px;top:325px;width:143px"></div>
<div class="lbl" style="left:11.4px;top:347.5px">年月日2</div>
<div class="val" style="left:11.4px;top:366px;letter-spacing:.32px">--/--/--</div>
<svg class="abs" style="left:139.9px;top:366.8px" width="13.300" height="14.250"><use href="#i-cal"/></svg>
<div class="ul" style="left:11.4px;top:384px;width:143px"></div>
<div class="lbl" style="left:11.4px;top:406.5px">年月日3</div>
<div class="val" style="left:11.4px;top:425px;letter-spacing:.32px">--/--/--</div>
<svg class="abs" style="left:139.9px;top:425.8px" width="13.300" height="14.250"><use href="#i-cal"/></svg>
<div class="ul" style="left:11.4px;top:443px;width:143px"></div>
<div class="lbl" style="left:11.4px;top:465.5px">年月日4</div>
<div class="val" style="left:11.4px;top:484px;letter-spacing:.32px">--/--/--</div>
<svg class="abs" style="left:139.9px;top:484.8px" width="13.300" height="14.250"><use href="#i-cal"/></svg>
<div class="ul" style="left:11.4px;top:502px;width:143px"></div>
<div class="lbl" style="left:174.6px;top:52.5px">雇用形態</div>
<div class="val" style="left:174.6px;top:71px">正社員</div>
<div class="ul" style="left:174.6px;top:89px;width:143px"></div>
<div class="lbl" style="left:337.9px;top:52.5px">契約番号</div>
<div class="val" style="left:337.9px;top:71px">CN-2022-1122</div>
<div class="ul" style="left:337.9px;top:89px;width:143.1px"></div>
<svg class="abs" style="left:474.5px;top:72px" width="8" height="10" viewBox="0 0 8 10" fill="none" stroke="#222" stroke-width="1.300" stroke-linecap="round" stroke-linejoin="round"><path d="M1.800 2 4.800 5 1.800 8"/></svg>
<div class="lbl" style="left:174.6px;top:111.5px">契約種別</div>
<div class="val" style="left:174.6px;top:130px">無期</div>
<div class="ul" style="left:174.6px;top:148px;width:143px"></div>
<div class="lbl" style="left:337.9px;top:111.5px">管理コード</div>
<div class="val" style="left:337.9px;top:130px">A-1024</div>
<div class="ul" style="left:337.9px;top:148px;width:143.1px"></div>
<svg class="abs" style="left:474.5px;top:131px" width="8" height="10" viewBox="0 0 8 10" fill="none" stroke="#222" stroke-width="1.300" stroke-linecap="round" stroke-linejoin="round"><path d="M1.800 2 4.800 5 1.800 8"/></svg>
<div class="lbl" style="left:174.6px;top:170.5px">更新区分</div>
<div class="val" style="left:174.6px;top:189px">自動更新</div>
<div class="ul" style="left:174.6px;top:207px;width:143px"></div>
<div class="lbl" style="left:337.9px;top:170.5px">部門コード</div>
<div class="val" style="left:337.9px;top:189px">HR-001</div>
<div class="ul" style="left:337.9px;top:207px;width:143.1px"></div>
<svg class="abs" style="left:474.5px;top:190px" width="8" height="10" viewBox="0 0 8 10" fill="none" stroke="#222" stroke-width="1.300" stroke-linecap="round" stroke-linejoin="round"><path d="M1.800 2 4.800 5 1.800 8"/></svg>
<div class="lbl" style="left:174.6px;top:229.5px">勤務形態</div>
<div class="val" style="left:174.6px;top:248px">フルタイム</div>
<div class="ul" style="left:174.6px;top:266px;width:143px"></div>
<div class="lbl" style="left:337.9px;top:229.5px">等級</div>
<div class="val" style="left:337.9px;top:248px">G3</div>
<div class="ul" style="left:337.9px;top:266px;width:143.1px"></div>
<svg class="abs" style="left:474.5px;top:249px" width="8" height="10" viewBox="0 0 8 10" fill="none" stroke="#222" stroke-width="1.300" stroke-linecap="round" stroke-linejoin="round"><path d="M1.800 2 4.800 5 1.800 8"/></svg>
<div class="cbox" style="left:174.3px;top:308.9px"></div>
<div class="val" style="left:194.6px;top:307px">チェック区分1</div>
<div class="ul" style="left:174.6px;top:325px;width:143px"></div>
<div class="cbox" style="left:174.3px;top:367.9px"></div>
<div class="val" style="left:194.6px;top:366px">チェック区分2</div>
<div class="ul" style="left:174.6px;top:384px;width:143px"></div>
<div class="cbox" style="left:174.3px;top:426.9px"></div>
<div class="val" style="left:194.6px;top:425px">チェック区分3</div>
<div class="ul" style="left:174.6px;top:443px;width:143px"></div>
<div class="cbox" style="left:174.3px;top:485.9px"></div>
<div class="val" style="left:194.6px;top:484px">チェック区分4</div>
<div class="ul" style="left:174.6px;top:502px;width:143px"></div>
<div class="lbl" style="left:337.9px;top:288.5px"></div>
<div class="val" style="left:337.9px;top:307px;letter-spacing:-.5px">ID-AKTR-QP21</div>
<div class="ul" style="left:337.9px;top:325px;width:143.1px"></div>
<svg class="abs" style="left:474.5px;top:308px" width="8" height="10" viewBox="0 0 8 10" fill="none" stroke="#222" stroke-width="1.300" stroke-linecap="round" stroke-linejoin="round"><path d="M1.800 2 4.800 5 1.800 8"/></svg>
<div class="lbl" style="left:337.9px;top:347.5px"></div>
<div class="val" style="left:337.9px;top:366px;letter-spacing:-.5px">ID-MNBV-ZX48</div>
<div class="ul" style="left:337.9px;top:384px;width:143.1px"></div>
<svg class="abs" style="left:474.5px;top:367px" width="8" height="10" viewBox="0 0 8 10" fill="none" stroke="#222" stroke-width="1.300" stroke-linecap="round" stroke-linejoin="round"><path d="M1.800 2 4.800 5 1.800 8"/></svg>
<div class="lbl" style="left:337.9px;top:406.5px"></div>
<div class="val" style="left:337.9px;top:425px;letter-spacing:-.5px">ID-FWEW-RR65</div>
<svg class="abs" style="left:467.85px;top:428.1px" width="13.300" height="12.350"><use href="#i-pen2"/></svg>
<div class="ul" style="left:337.9px;top:443px;width:143.1px"></div>
</div>

<!-- CHAT PANEL -->
<div id="chat"><div id="chatin">
  <div id="chead">
    <svg class="abs" style="left:16px;top:12.500px" width="24" height="23" viewBox="0 0 24 23" fill="none" stroke="#fff" stroke-width="1.500" stroke-linejoin="round"><rect x="1.800" y="1.700" width="20.200" height="19.600" rx="4.500"/><path d="M8.800 1.700v19.600"/></svg>
    <div class="t" style="left:48.600px;top:13px;font-size:16px;line-height:22px;font-weight:700;color:#fff">SI アシスタント</div>
    <svg class="abs" style="left:291px;top:13px" width="22" height="22" viewBox="0 0 24 24" fill="none" stroke="#fff" stroke-width="1.700" stroke-linejoin="round"><path d="M10.300 2.300h3.400l.6 2.500c.6.200 1.200.5 1.700.8l2.300-1.200 2.400 2.400-1.200 2.300c.3.500.6 1.100.8 1.700l2.500.6v3.400l-2.500.6c-.2.600-.5 1.200-.8 1.700l1.200 2.300-2.400 2.400-2.300-1.200c-.5.300-1.100.6-1.700.8l-.6 2.500h-3.400l-.6-2.500c-.6-.2-1.200-.5-1.700-.8l-2.300 1.200-2.400-2.400 1.200-2.300c-.3-.5-.6-1.100-.8-1.700l-2.500-.6v-3.400l2.500-.6c.2-.6.500-1.200.8-1.700L4.300 6.800l2.400-2.400L9 5.600c.5-.3 1.100-.6 1.700-.8Z" stroke-width="1.600"/><circle cx="12" cy="12.300" r="3.300"/></svg>
  </div>
  <div class="ctab on">
    <svg class="abs" style="left:15.300px;top:9.400px" width="20.500" height="20.500"><use href="#i-spark"/></svg>
    <div class="t" style="left:44.300px;top:10.500px;font-size:14px;line-height:20px;font-weight:700;color:#0e6ab8">AIアシスタント</div>
  </div>
  <div class="ctab off">
    <svg class="abs" style="left:17px;top:11px" width="18" height="19" viewBox="0 0 18 19"><path d="M1.500 11V8.500C1.500 4.400 4.900 1 9 1s7.500 3.400 7.500 7.500V13c0 2.500-1.800 4.300-4.300 4.500" fill="none" stroke="#a9a9a9" stroke-width="1.600" stroke-linecap="round"/><rect x="1" y="8.500" width="4.600" height="7.200" rx="2" fill="#a9a9a9"/><rect x="12.400" y="8.500" width="4.600" height="7.200" rx="2" fill="#a9a9a9"/><circle cx="11" cy="17.300" r="1.400" fill="#a9a9a9"/></svg>
    <div class="t" style="left:40.900px;top:10.500px;font-size:14px;line-height:20px;font-weight:700;color:#a9a9a9">チャットボット</div>
  </div>
  <div class="abs" style="left:321.500px;top:88px;width:8.500px;height:446px;background:#f6f6f6"></div>
  <div class="abs" style="left:324.300px;top:90.500px;width:3.200px;height:199px;border-radius:2px;background:#c2c2c2"></div>

  <!-- msg 1 -->
  <div class="abs" style="left:68px;top:104px;width:246px;height:112px;border-radius:8px;background:#f6f6f6;border:1px solid #e9e9e9"></div>
  <div class="abs" style="left:80.400px;top:112.500px;font-size:14px;line-height:24.300px;color:#222;white-space:nowrap">こんにちは。ご質問やご不明な点<br>がございましたら、お気軽にお問<br>い合わせください。</div>
  <div class="t" style="left:180px;top:190.500px;width:121.700px;text-align:right;font-size:12px;line-height:16px;color:#8a8a8a;white-space:pre;word-spacing:1.400px">2025.09.17  21:30</div>
  <div class="bot" style="left:16.200px;top:176px"><svg class="abs" style="left:7.700px;top:13.200px" width="24.400" height="13.700"><use href="#i-logo"/></svg></div>

  <!-- msg 2 -->
  <div class="abs" style="left:32px;top:240px;width:282px;height:87.500px;border-radius:8px;background:linear-gradient(50deg,#0a66b6 0%,#1777c9 55%,#2a8bd9 100%)"></div>
  <div class="abs" style="left:45px;top:248.700px;font-size:14px;line-height:24px;color:#fff;white-space:nowrap">こんにちは。スタッフフィルターテンプ<br>レートを作成してください。</div>
  <div class="t" style="left:180px;top:302.500px;width:121.700px;text-align:right;font-size:12px;line-height:16px;color:#d3e5f6;white-space:pre;word-spacing:1.400px">2025.09.17  21:33</div>

  <!-- typing -->
  <div class="bot" style="left:16.200px;top:352px"><svg class="abs" style="left:7.700px;top:13.200px" width="24.400" height="13.700"><use href="#i-logo"/></svg></div>
  <div class="abs" style="left:68px;top:352.200px;width:222px;height:35.800px;border-radius:8px;background:#f6f6f6"></div>
  <div class="abs" style="left:94.800px;top:366.200px;width:8px;height:8px;border-radius:50%;background:#dce8f4"></div>
  <div class="abs" style="left:113px;top:364.200px;width:12px;height:12px;border-radius:50%;background:linear-gradient(45deg,#0c69b9,#2a8bd9)"></div>
  <div class="abs" style="left:134.900px;top:366.200px;width:8px;height:8px;border-radius:50%;background:#dce8f4"></div>
  <div class="abs" style="left:166px;top:400.200px;width:124px;height:23.500px;border-radius:12px;background:#f6f6f6"></div>
  <svg class="abs" style="left:174.500px;top:405px" width="14" height="14" viewBox="0 0 14 14"><circle cx="7" cy="7" r="7" fill="#111"/><path d="M5.300 4.600v4.800M8.700 4.600v4.800" stroke="#fff" stroke-width="1.600" stroke-linecap="round"/></svg>
  <div class="t" style="left:198.400px;top:404px;font-size:12px;line-height:16px;color:#222">生成を一時停止</div>

  <!-- footer -->
  <div class="abs" style="left:0;top:534px;width:330px;height:1px;background:#e9e9e9"></div>
  <svg class="abs" style="left:16px;top:562px" width="24" height="24" viewBox="0 0 24 24" fill="none" stroke="#343645" stroke-width="1.600" stroke-linecap="round" stroke-linejoin="round"><path d="M14.500 1.900H8c-3.900 0-6.100 2.200-6.100 6.100v8c0 3.900 2.200 6.100 6.100 6.100h8c3.900 0 6.100-2.200 6.100-6.100V9.500Z"/><path d="M14.500 1.900c0 5 2.600 7.600 7.600 7.600"/><path d="M9 16.800v-5.600M6.800 13.300 9 11.100l2.200 2.200" stroke-width="1.500"/></svg>
  <svg class="abs" style="left:48px;top:562px" width="24" height="24" viewBox="0 0 24 24" fill="none" stroke="#343645" stroke-width="1.600" stroke-linecap="round" stroke-linejoin="round"><rect x="1.900" y="1.900" width="20.200" height="20.200" rx="6.500"/><path d="M6.400 10v4M9.200 7.600v8.800M12 6.500v11M14.800 7.600v8.800M17.600 10v4" stroke-width="1.500"/></svg>
  <div class="abs" style="left:88.200px;top:550.200px;width:225.800px;height:47.800px;border-radius:8px;background:#f6f6f6;border:1px solid #ededed"></div>
  <div class="t" style="left:100.700px;top:564px;font-size:14px;line-height:20px;color:#b9b9b9">何か入力してください</div>
  <svg class="abs" style="left:279.500px;top:563px" width="22" height="22" viewBox="0 0 22 22"><path d="M3.600 2.300 19.300 9.400c1.400.6 1.400 2.600 0 3.200L3.600 19.700c-1.500.7-3-.8-2.300-2.300L4 11.900c.3-.6.300-1.200 0-1.800L1.300 4.600C.6 3.100 2.100 1.600 3.600 2.300Z" fill="#c6c6c6"/></svg>
</div></div>
<!-- FAB -->
<div id="fab"><svg class="abs" style="left:18px;top:18px" width="20" height="20" viewBox="0 0 20 20" fill="none" stroke="#fff" stroke-width="1.600" stroke-linecap="round"><path d="M2.700 2.300 17.300 17.700M17.300 2.300 2.700 17.700"/></svg></div>

</div>
</body>
</html>
